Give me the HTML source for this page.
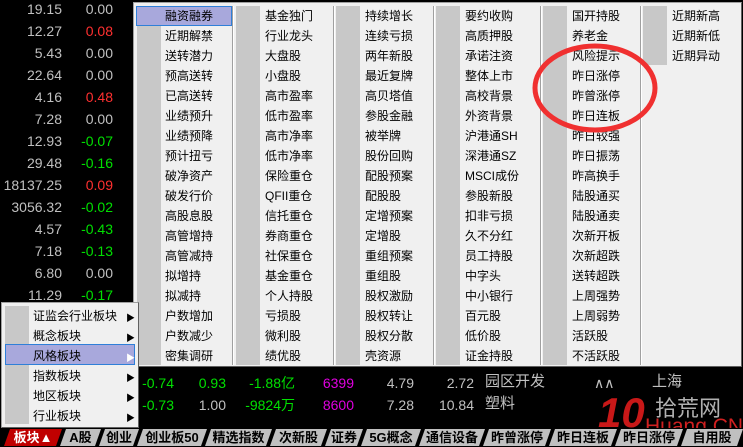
<!DOCTYPE html>
<html><head><meta charset="utf-8"><style>
*{margin:0;padding:0;box-sizing:border-box}
body{width:743px;height:447px;background:#000;overflow:hidden;position:relative;font-family:"Liberation Sans","Noto Sans CJK SC",sans-serif}
.n{position:absolute;font-size:14px;line-height:16px;text-align:right;color:#c0c0c0;font-family:"Liberation Sans",sans-serif}
.r{color:#ff3030}.g{color:#00e000}.m{color:#e000e0}
#menu{position:absolute;left:133px;top:2px;width:609px;height:365px;background:#f0f0f0;border:1px solid #a0a0a0;border-right-color:#606060;border-bottom-color:#606060}
.strip{position:absolute;background:#c8c8c8;width:24px}
.sep{position:absolute;top:3px;width:2px;height:359px;border-left:1px solid #a0a0a0;border-right:1px solid #fff}
.it{position:absolute;font-size:12px;line-height:20px;color:#000;white-space:nowrap}
#sub{position:absolute;left:1px;top:302px;width:138px;height:126px;background:#f0f0f0;border:1px solid #a0a0a0;border-right-color:#606060;border-bottom-color:#606060}
.hl{position:absolute;background:#a8a8dc;border:1px solid #2f7fd8}
.arr{position:absolute;font-size:9px;color:#000}
#tabs{position:absolute;left:0;top:428px;width:743px;height:19px;background:#000}
.tab{position:absolute;top:1px;height:17px;background:#c0c0c0;font-size:13px;font-weight:bold;line-height:17px;text-align:center;color:#000;clip-path:polygon(6px 0,100% 0,calc(100% - 6px) 100%,0 100%)}
</style></head><body>

<div class="n" style="left:0;width:62px;top:1px">19.15</div><div class="n" style="left:62px;width:51px;top:1px">0.00</div>
<div class="n" style="left:0;width:62px;top:23px">12.27</div><div class="n r" style="left:62px;width:51px;top:23px">0.08</div>
<div class="n" style="left:0;width:62px;top:45px">5.43</div><div class="n" style="left:62px;width:51px;top:45px">0.00</div>
<div class="n" style="left:0;width:62px;top:67px">22.64</div><div class="n" style="left:62px;width:51px;top:67px">0.00</div>
<div class="n" style="left:0;width:62px;top:89px">4.16</div><div class="n r" style="left:62px;width:51px;top:89px">0.48</div>
<div class="n" style="left:0;width:62px;top:111px">7.28</div><div class="n" style="left:62px;width:51px;top:111px">0.00</div>
<div class="n" style="left:0;width:62px;top:133px">12.93</div><div class="n g" style="left:62px;width:51px;top:133px">-0.07</div>
<div class="n" style="left:0;width:62px;top:155px">29.48</div><div class="n g" style="left:62px;width:51px;top:155px">-0.16</div>
<div class="n" style="left:0;width:62px;top:177px">18137.25</div><div class="n r" style="left:62px;width:51px;top:177px">0.09</div>
<div class="n" style="left:0;width:62px;top:199px">3056.32</div><div class="n g" style="left:62px;width:51px;top:199px">-0.02</div>
<div class="n" style="left:0;width:62px;top:221px">4.57</div><div class="n g" style="left:62px;width:51px;top:221px">-0.43</div>
<div class="n" style="left:0;width:62px;top:243px">7.18</div><div class="n g" style="left:62px;width:51px;top:243px">-0.13</div>
<div class="n" style="left:0;width:62px;top:265px">6.80</div><div class="n" style="left:62px;width:51px;top:265px">0.00</div>
<div class="n" style="left:0;width:62px;top:287px">11.29</div><div class="n g" style="left:62px;width:51px;top:287px">-0.17</div>

<!-- bottom rows -->
<div class="n g" style="left:130px;width:44px;top:375px">-0.74</div>
<div class="n g" style="left:180px;width:46px;top:375px">0.93</div>
<div class="n g" style="left:236px;width:59px;top:375px">-1.88亿</div>
<div class="n m" style="left:310px;width:44px;top:375px">6399</div>
<div class="n" style="left:370px;width:44px;top:375px">4.79</div>
<div class="n" style="left:430px;width:44px;top:375px">2.72</div>
<div class="n" style="left:485px;top:374px;text-align:left;font-size:15px">园区开发</div>
<div class="n" style="left:594px;top:375px;text-align:left">∧∧</div>
<div class="n" style="left:652px;top:374px;text-align:left;font-size:15px">上海</div>
<div class="n g" style="left:130px;width:44px;top:397px">-0.73</div>
<div class="n" style="left:180px;width:46px;top:397px">1.00</div>
<div class="n g" style="left:236px;width:59px;top:397px">-9824万</div>
<div class="n m" style="left:310px;width:44px;top:397px">8600</div>
<div class="n" style="left:370px;width:44px;top:397px">7.28</div>
<div class="n" style="left:430px;width:44px;top:397px">10.84</div>
<div class="n" style="left:485px;top:396px;text-align:left;font-size:15px">塑料</div>

<!-- watermark -->
<div style="position:absolute;left:598px;top:390px;font-size:42px;font-weight:bold;font-style:italic;color:#c81818;line-height:46px;font-family:'Liberation Sans',sans-serif">10</div>
<div style="position:absolute;left:655px;top:397px;font-size:22px;color:#b0b0b0;line-height:24px">拾荒网</div>
<div style="position:absolute;left:645px;top:416px;font-size:21px;color:#d02020;line-height:22px;font-family:'Liberation Sans',sans-serif">Huang.CN</div>

<div id="menu">
<div class="strip" style="left:3px;top:3px;height:359px"></div>
<div class="sep" style="left:98px"></div>
<div class="strip" style="left:102px;top:3px;height:359px"></div>
<div class="sep" style="left:199px"></div>
<div class="strip" style="left:202px;top:3px;height:359px"></div>
<div class="sep" style="left:299px"></div>
<div class="strip" style="left:302px;top:3px;height:359px"></div>
<div class="sep" style="left:406px"></div>
<div class="strip" style="left:409px;top:3px;height:359px"></div>
<div class="sep" style="left:506px"></div>
<div class="strip" style="left:509px;top:3px;height:59px"></div>
<div class="hl" style="left:2px;top:3px;width:96px;height:20px"></div>
<div class="it" style="left:31px;top:3px">融资融券<br>近期解禁<br>送转潜力<br>预高送转<br>已高送转<br>业绩预升<br>业绩预降<br>预计扭亏<br>破净资产<br>破发行价<br>高股息股<br>高管增持<br>高管减持<br>拟增持<br>拟减持<br>户数增加<br>户数减少<br>密集调研</div>
<div class="it" style="left:131px;top:3px">基金独门<br>行业龙头<br>大盘股<br>小盘股<br>高市盈率<br>低市盈率<br>高市净率<br>低市净率<br>保险重仓<br>QFII重仓<br>信托重仓<br>券商重仓<br>社保重仓<br>基金重仓<br>个人持股<br>亏损股<br>微利股<br>绩优股</div>
<div class="it" style="left:231px;top:3px">持续增长<br>连续亏损<br>两年新股<br>最近复牌<br>高贝塔值<br>参股金融<br>被举牌<br>股份回购<br>配股预案<br>配股股<br>定增预案<br>定增股<br>重组预案<br>重组股<br>股权激励<br>股权转让<br>股权分散<br>壳资源</div>
<div class="it" style="left:331px;top:3px">要约收购<br>高质押股<br>承诺注资<br>整体上市<br>高校背景<br>外资背景<br>沪港通SH<br>深港通SZ<br>MSCI成份<br>参股新股<br>扣非亏损<br>久不分红<br>员工持股<br>中字头<br>中小银行<br>百元股<br>低价股<br>证金持股</div>
<div class="it" style="left:438px;top:3px">国开持股<br>养老金<br>风险提示<br>昨日涨停<br>昨曾涨停<br>昨日连板<br>昨日较强<br>昨日振荡<br>昨高换手<br>陆股通买<br>陆股通卖<br>次新开板<br>次新超跌<br>送转超跌<br>上周强势<br>上周弱势<br>活跃股<br>不活跃股</div>
<div class="it" style="left:538px;top:3px">近期新高<br>近期新低<br>近期异动</div>
<svg style="position:absolute;left:396px;top:38px" width="130" height="96"><ellipse cx="65" cy="47" rx="60" ry="42" fill="none" stroke="#f03030" stroke-width="5"/></svg>
</div>

<div id="sub">
<div class="strip" style="left:3px;top:3px;height:118px"></div>
<div class="hl" style="left:3px;top:41px;width:130px;height:21px"></div>
<div class="it" style="left:31px;top:3px">证监会行业板块<br>概念板块<br>风格板块<br>指数板块<br>地区板块<br>行业板块</div>
<div class="arr" style="left:124px;top:8px">▶</div>
<div class="arr" style="left:124px;top:28px">▶</div>
<div class="arr" style="left:124px;top:48px;color:#fff">▶</div>
<div class="arr" style="left:124px;top:68px">▶</div>
<div class="arr" style="left:124px;top:88px">▶</div>
<div class="arr" style="left:124px;top:108px">▶</div>
</div>

<div id="tabs">
<div class="tab" style="left:4px;width:58px;background:#c00000;color:#fff">板块▲</div>
<div class="tab" style="left:60px;width:41px">A股</div>
<div class="tab" style="left:99px;width:40px">创业</div>
<div class="tab" style="left:137px;width:70px">创业板50</div>
<div class="tab" style="left:205px;width:67px">精选指数</div>
<div class="tab" style="left:270px;width:57px">次新股</div>
<div class="tab" style="left:325px;width:38px">证券</div>
<div class="tab" style="left:361px;width:60px">5G概念</div>
<div class="tab" style="left:419px;width:66px">通信设备</div>
<div class="tab" style="left:483px;width:68px">昨曾涨停</div>
<div class="tab" style="left:549px;width:68px">昨日连板</div>
<div class="tab" style="left:615px;width:68px">昨日涨停</div>
<div class="tab" style="left:681px;width:62px">自用股</div>
</div>
</body></html>
